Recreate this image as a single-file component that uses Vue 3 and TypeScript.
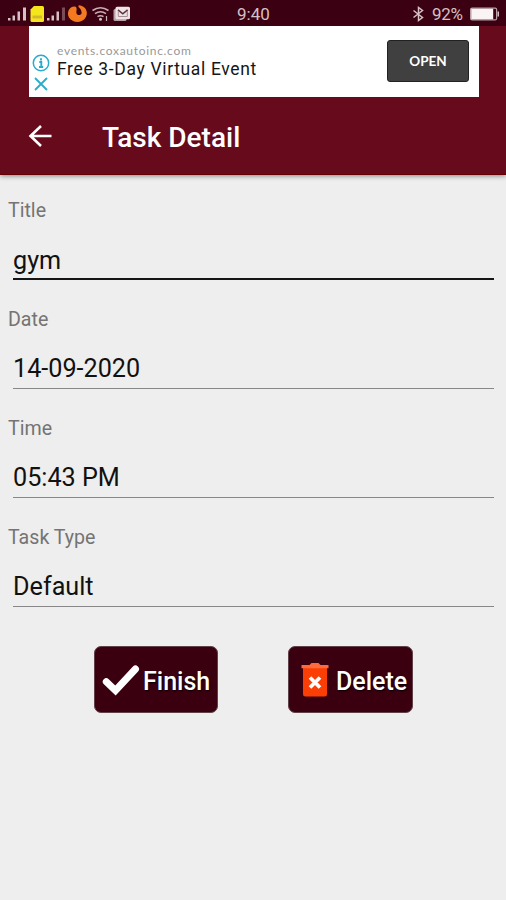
<script setup lang="ts">
interface Field {
  label: string
  value: string
  focused: boolean
}

const fields: Field[] = [
  { label: 'Title', value: 'gym', focused: true },
  { label: 'Date', value: '14-09-2020', focused: false },
  { label: 'Time', value: '05:43 PM', focused: false },
  { label: 'Task Type', value: 'Default', focused: false },
]
</script>

<template>
  <div class="screen">
    <header class="top">
      <div class="status">
        <svg class="status-left" width="140" height="26" viewBox="0 0 140 26">
          <g fill="#d6c0c4">
            <path d="M8 17h2.500v2.500H8zM12.500 14.500h2.500v5h-2.500zM17.500 10.500h2.500v9h-2.500zM23 6.500h3v13h-3z" />
            <path d="M47 17h2.500v2.500H47zM51.500 14.500h2.500v5h-2.500zM56.500 10.500h2.500v9h-2.500z" />
            <path d="M62 6.500h3v13h-3z" opacity=".4" />
          </g>
          <path d="M34 5h8.500q1.500 0 1.500 1.500V19.500q0 1.500-1.500 1.500H32q-1.500 0-1.500-1.500V8.500z" fill="#f5e51c" />
          <path d="M32.500 14.500h9.500v3h-9.500z" fill="#d6b82c" />
          <path d="M74.500 5.500C69 5.500 66.500 12 69 16.500c3.500 5.500 12 6 16 1C89.500 12 85.500 4.500 79 4.300c-1.500 1.200 0 2 1.200 3.500c2 3 2 6-0.700 6.200c-2.800 0.200-3.500-2-3-4.500C77 7.500 76.500 5.500 74.500 5.500z" fill="#f47a20" />
          <g fill="none" stroke="#c9aeb3" stroke-width="1.600">
            <path d="M92.500 9.500q8-5.500 16 0" />
            <path d="M95 12.700q5.500-3.800 11 0" />
            <path d="M97.500 15.700q3-2 6 0" />
          </g>
          <circle cx="100.500" cy="18.300" r="1.500" fill="#d6c0c4" />
          <path d="M106.500 15v5" stroke="#c9aeb3" stroke-width="1.200" />
          <rect x="113.500" y="8" width="13" height="12" rx="1.500" fill="#b8a2a7" />
          <rect x="115.500" y="5.800" width="14.500" height="12.500" rx="1.500" fill="#eee4e6" />
          <path d="M118 8.800l4.800 4 4.800-4" fill="none" stroke="#5b3640" stroke-width="1.500" />
          <path d="M118.300 10v5.500h9V10" fill="none" stroke="#a58d93" stroke-width="1" />
        </svg>
        <span class="clock">9:40</span>
        <div class="status-right">
          <svg width="14" height="16" viewBox="0 0 14 16">
            <path d="M1.500 4.500l9 7L6.500 14.500v-13l4 3-9 7" fill="none" stroke="#d6c0c4" stroke-width="1.500" />
          </svg>
          <span class="percent">92%</span>
          <svg width="30" height="14" viewBox="0 0 30 14">
            <rect x=".6" y="1.100" width="26" height="11.800" rx="1.500" fill="none" stroke="#b8a2a7" stroke-width="1.200" />
            <rect x="1.200" y="1.700" width="22" height="10.600" fill="#fbf4f5" />
            <path d="M27.500 4.500h1.500v5h-1.500z" fill="#d6c0c4" />
          </svg>
        </div>
      </div>

      <div class="ad">
        <div class="ad-marks">
          <svg width="18" height="18" viewBox="0 0 18 18">
            <circle cx="9" cy="9" r="7.700" fill="none" stroke="#29abcb" stroke-width="1.500" />
            <path d="M9 4.200v2.200M7.300 8h2v5M7 13h4.200" fill="none" stroke="#29abcb" stroke-width="1.900" />
          </svg>
          <svg width="14" height="14" viewBox="0 0 14 14">
            <path d="M1 1l12 12M13 1L1 13" stroke="#29abcb" stroke-width="1.800" />
          </svg>
        </div>
        <div class="ad-copy">
          <span class="ad-url">events.coxautoinc.com</span>
          <span class="ad-title">Free 3-Day Virtual Event</span>
        </div>
        <button class="ad-open" type="button">OPEN</button>
      </div>

      <div class="toolbar">
        <svg width="24" height="24" viewBox="0 0 24 24">
          <path d="M23.500 12H2.500M13 2L2.500 12 13 22" fill="none" stroke="#fff" stroke-width="2.600" />
        </svg>
        <h1>Task Detail</h1>
      </div>
    </header>

    <main>
      <div v-for="field in fields" :key="field.label" class="field" :class="{ focused: field.focused }">
        <span class="label">{{ field.label }}</span>
        <div class="value">{{ field.value }}</div>
      </div>

      <div class="actions">
        <button class="action finish" type="button">
          <svg width="38" height="32" viewBox="0 0 38 32">
            <path d="M4.300 17.700l9.200 8.800L33.500 5" fill="none" stroke="#fff" stroke-width="7" stroke-linecap="round" stroke-linejoin="miter" />
          </svg>
          <span>Finish</span>
        </button>
        <button class="action delete" type="button">
          <svg width="28" height="36" viewBox="0 0 28 36">
            <path d="M2 5h24v27q0 2.500-2.500 2.500h-19Q2 34.500 2 32z" fill="#fb3e06" />
            <path d="M.5 3h8l2-2h7l2 2h8v3.200H.5z" fill="#fd6a3b" />
            <path d="M9 15.500l10 10M19 15.500l-10 10" stroke="#fff" stroke-width="3.700" />
          </svg>
          <span>Delete</span>
        </button>
      </div>
    </main>
  </div>
</template>

<style>
body {
  margin: 0;
  background: #eee;
}
</style>

<style scoped>
.screen {
  width: 506px;
  height: 900px;
  overflow: hidden;
  background: #eee;
  font-family: Roboto, "Liberation Sans", sans-serif;
}
.top {
  height: 175px;
  box-sizing: border-box;
  background: #660a1c;
  border-bottom: 1px solid #650005;
  box-shadow: 0 1px 5px rgba(0, 0, 0, 0.45);
}
.status {
  display: grid;
  grid-template-columns: 237px 1fr auto;
  align-items: center;
  height: 26px;
  padding-right: 6px;
  background: #3b0011;
  color: #d6c0c4;
}
.status-left {
  display: block;
}
.clock {
  padding-top: 1px;
  font-size: 17px;
  line-height: 26px;
}
.status-right {
  display: flex;
  align-items: center;
}
.percent {
  width: 31px;
  margin: 0 7px 0 6px;
  font-size: 17px;
  line-height: 26px;
  letter-spacing: -0.3px;
}
.ad {
  display: flex;
  width: 450px;
  height: 71px;
  margin-left: 29px;
  background: #fff;
}
.ad-marks {
  display: flex;
  flex-direction: column;
  align-items: center;
  gap: 5px;
  width: 18px;
  padding: 28px 0 0 3px;
}
.ad-copy {
  display: flex;
  flex-direction: column;
  flex: 1;
  padding: 17px 0 0 7px;
}
.ad-url {
  font-family: Lato, sans-serif;
  font-size: 12px;
  line-height: 15px;
  letter-spacing: 0.7px;
  color: #999;
}
.ad-title {
  font-size: 17.5px;
  line-height: 22px;
  letter-spacing: 0.65px;
  color: #161616;
}
.ad-open {
  width: 82px;
  height: 42px;
  margin: 14px 10px 0 0;
  padding: 0;
  border: 1px solid #222;
  border-radius: 3px;
  background: #404040;
  color: #fff;
  font: 700 13.500px/40px Lato, sans-serif;
}
.toolbar {
  display: flex;
  align-items: center;
  height: 77px;
  padding-left: 28px;
}
h1 {
  margin: 4px 0 0 50px;
  color: #fff;
  font-size: 28px;
  font-weight: 500;
  line-height: 36px;
}
main {
  padding-top: 24px;
}
.field {
  height: 109px;
  padding: 0 12px 0 8px;
  box-sizing: border-box;
}
.label {
  display: block;
  height: 24px;
  line-height: 24px;
  font-size: 19.6px;
  color: #747474;
}
.value {
  height: 48px;
  margin: 9px 0 0 5px;
  padding-top: 13px;
  box-sizing: border-box;
  border-bottom: 1px solid #888;
  font-size: 25.2px;
  line-height: 30px;
  color: #111;
}
.focused .value {
  padding-top: 14px;
  border-bottom: 2px solid #151515;
}
.actions {
  display: flex;
  gap: 70px;
  padding: 11px 0 0 94px;
}
.action {
  display: flex;
  align-items: center;
  box-sizing: border-box;
  height: 67px;
  padding: 0;
  border: 1px solid #60424a;
  border-radius: 7px;
  background: #3b0010;
  color: #fff;
  font: 500 25px/30px Roboto, sans-serif;
  text-shadow: 1px 1px 2px #000;
}
.action span {
  padding-top: 4px;
}
.finish {
  width: 124px;
  padding-left: 7px;
}
.finish span {
  margin-left: 3px;
}
.delete {
  width: 125px;
  padding-left: 12px;
}
.delete span {
  margin-left: 7px;
}
</style>
